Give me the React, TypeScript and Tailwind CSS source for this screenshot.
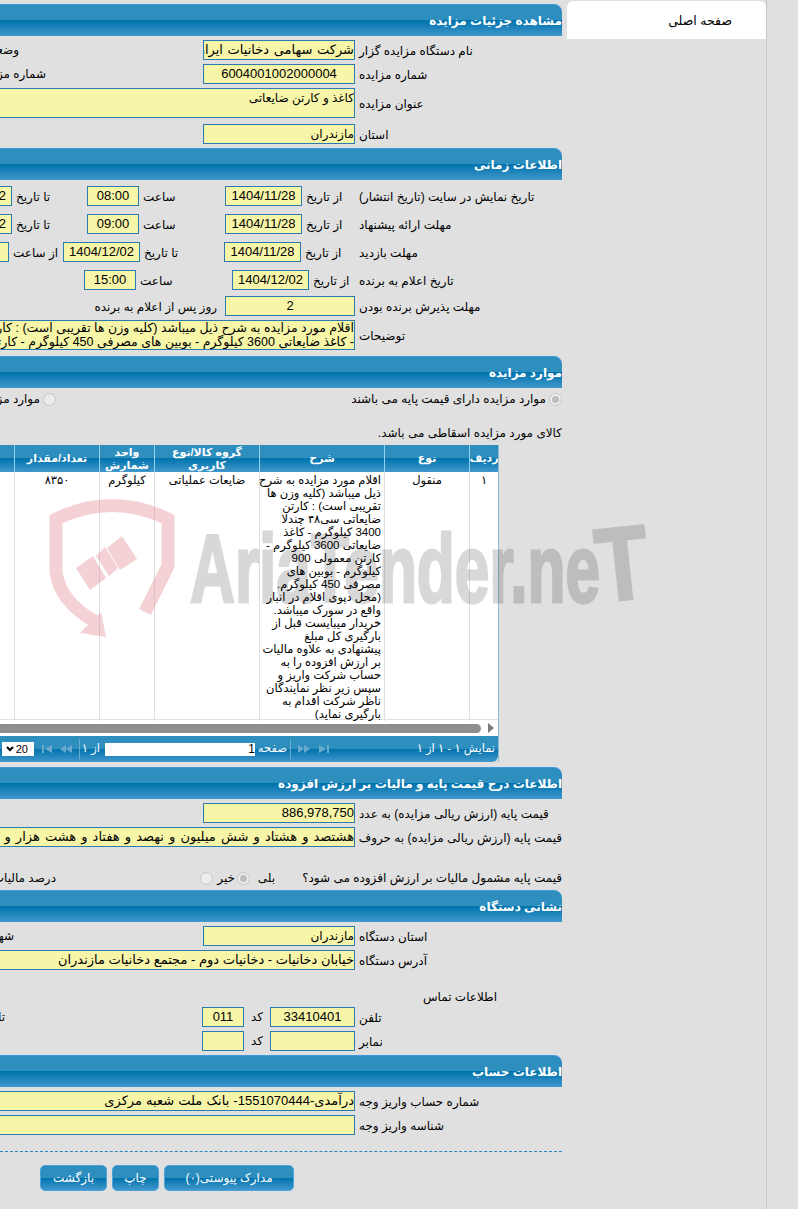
import type { ReactNode } from "react";

const BAR_BG =
  "bg-[linear-gradient(180deg,#2e8fbf_0%,#2e8fbf_48%,#0072ac_50%,#4198cc_100%)]";

const DESCRIPTION_LINES = [
  "اقلام مورد مزایده به شرح",
  "ذیل میباشد (کلیه وزن ها",
  "تقریبی است) : کارتن",
  "ضایعاتی سی۴۸ چندلا",
  "3400 کیلوگرم - کاغذ",
  "ضایعاتی 3600 کیلوگرم -",
  "کارتن معمولی 900",
  "کیلوگرم - بوبین های",
  "مصرفی 450 کیلوگرم.",
  "(محل دپوی اقلام در انبار",
  "واقع در سورک میباشد.",
  "خریدار میبایست قبل از",
  "بارگیری کل مبلغ",
  "پیشنهادی به علاوه مالیات",
  "بر ارزش افزوده را به",
  "حساب شرکت واریز و",
  "سپس زیر نظر نمایندگان",
  "ناظر شرکت اقدام به",
  "بارگیری نماید)",
];

const COLUMNS = ["ردیف", "نوع", "شرح", "گروه کالا/نوع کاربری", "واحد شمارش", "تعداد/مقدار", "قیمت پایه"];
const GRID = "grid grid-cols-[29px_85px_125px_105px_55px_85px_100px] w-[584px]";

function SectionHeader({ title, className = "" }: { title: string; className?: string }) {
  return (
    <div
      className={`h-8 w-[760px] rounded-tr-lg border-t border-[#3f9be0] ${BAR_BG} flex items-center text-[12px] font-bold text-white ${className}`}
    >
      {title}
    </div>
  );
}

function Box({
  children,
  className = "w-[152px]",
}: {
  children?: ReactNode;
  className?: string;
}) {
  return (
    <div
      className={`h-5 shrink-0 overflow-hidden whitespace-nowrap border border-[#2a7cae] bg-[#f7f5a8] text-[13px] leading-[18px] text-black ${className}`}
    >
      {children}
    </div>
  );
}

function Row({
  label,
  children,
  className = "",
}: {
  label: string;
  children?: ReactNode;
  className?: string;
}) {
  return (
    <div className={`flex items-center ${className}`}>
      <div className="w-[207px] shrink-0 pl-1 pt-[2px] text-left whitespace-nowrap">{label}</div>
      {children}
    </div>
  );
}

function Cell({ children, className = "" }: { children: ReactNode; className?: string }) {
  return <div className={`shrink-0 whitespace-nowrap pl-1 pt-[2px] text-left ${className}`}>{children}</div>;
}

function Radio({ checked = false }: { checked?: boolean }) {
  return (
    <span className="flex h-[13px] w-[13px] shrink-0 items-center justify-center rounded-full border border-[#c6c6c6] bg-[#ececec]">
      {checked && <span className="h-[7px] w-[7px] rounded-full bg-[#bdbdbd]" />}
    </span>
  );
}

function PagerIcon({ kind }: { kind: "first" | "prev" | "next" | "last" }) {
  return (
    <svg width="12" height="8" viewBox="0 0 12 8" className="shrink-0 fill-[#6aa9cf]">
      {kind === "last" && <path d="M1 0l7 4-7 4zM9 0h2v8H9z" />}
      {kind === "next" && <path d="M0 0l6 4-6 4zM6 0l6 4-6 4z" />}
      {kind === "prev" && <path d="M12 0L6 4l6 4zM6 0L0 4l6 4z" />}
      {kind === "first" && <path d="M11 0L4 4l7 4zM1 0h2v8H1z" />}
    </svg>
  );
}

function Watermark() {
  return (
    <svg
      width="798"
      height="1209"
      viewBox="0 0 798 1209"
      className="pointer-events-none absolute left-0 top-0 [direction:ltr]"
    >
      <g opacity="0.38">
        <path
          d="M145 612 L168 566 V519 Q112 492 56 519 V572 Q60 602 96 622"
          fill="none"
          stroke="#e2878f"
          strokeWidth="13"
        />
        <g fill="#e2878f">
          <path d="M106 637 L80 633 L101 612 Z" />
          <path d="M76 568 L93 556 L106 578 L90 590 Z" />
          <path d="M107 548 L122 536 L137 559 L120 570 Z" />
          <path d="M96 556 L105 547 L118 568 L109 576 Z" />
        </g>
      </g>
      <g
        opacity="0.15"
        fill="#000"
        stroke="#000"
        strokeWidth="3"
        fontFamily="'Liberation Sans', sans-serif"
        fontWeight="700"
      >
        <text
          x="190"
          y="602"
          textLength="410"
          lengthAdjust="spacingAndGlyphs"
          className="[direction:ltr]"
          fontSize="96"
        >
          AriaTender.ne
        </text>
        <text
          x="600"
          y="602"
          textLength="52"
          lengthAdjust="spacingAndGlyphs"
          className="[direction:ltr]"
          fontSize="104"
          transform="rotate(-6 600 602)"
        >
          T
        </text>
      </g>
    </svg>
  );
}

export default function App() {
  return (
    <div
      dir="rtl"
      className="relative flex h-[1209px] w-[798px] overflow-hidden bg-[#e0e0e0] font-['Liberation_Sans','DejaVu_Sans',sans-serif] text-[12px] text-black"
    >
      {/* نوار کناری */}
      <div className="w-[32px] shrink-0 border-l border-[#c8c8c8]" />
      <div className="mt-px h-[38px] w-[199px] shrink-0 rounded-t-md bg-white pr-[34px] pt-[11px] text-[12.5px]">
        صفحه اصلی
      </div>
      <div className="w-[5px] shrink-0" />

      <main className="w-[562px] shrink-0 overflow-hidden pt-1">
        <SectionHeader title="مشاهده جزئیات مزایده" />
        <Row label="نام دستگاه مزایده گزار" className="mt-1">
          <Box className="w-[152px] [word-spacing:1px]">شرکت سهامی دخانیات ایران</Box>
          <div className="mr-[184px] shrink-0 whitespace-nowrap">وضعیت</div>
        </Row>
        <Row label="شماره مزایده" className="mt-1">
          <Box className="w-[152px] text-center">6004001002000004</Box>
          <div className="mr-[157px] shrink-0 whitespace-nowrap">شماره مزایده</div>
        </Row>
        <Row label="عنوان مزایده" className="mt-1">
          <Box className="!h-[30px] w-[500px] !text-[12px]">کاغذ و کارتن ضایعاتی</Box>
        </Row>
        <Row label="استان" className="mt-1.5">
          <Box className="w-[152px] !text-[12px]">مازندران</Box>
        </Row>

        <SectionHeader title="اطلاعات زمانی" className="mt-1" />
        <Row label="تاریخ نمایش در سایت (تاریخ انتشار)" className="mt-1.5">
          <Cell className="w-[53px]">از تاریخ</Cell>
          <Box className="w-[77px] text-center">1404/11/28</Box>
          <Cell className="w-[86px]">ساعت</Cell>
          <Box className="w-[52px] text-center">08:00</Box>
          <Cell className="w-[75px]">تا تاریخ</Cell>
          <Box className="w-[77px] text-center">1404/12/02</Box>
        </Row>
        <Row label="مهلت ارائه پیشنهاد" className="mt-2">
          <Cell className="w-[53px]">از تاریخ</Cell>
          <Box className="w-[77px] text-center">1404/11/28</Box>
          <Cell className="w-[86px]">ساعت</Cell>
          <Box className="w-[52px] text-center">09:00</Box>
          <Cell className="w-[75px]">تا تاریخ</Cell>
          <Box className="w-[77px] text-center">1404/12/02</Box>
        </Row>
        <Row label="مهلت بازدید" className="mt-2">
          <Cell className="w-[54px]">از تاریخ</Cell>
          <Box className="w-[77px] text-center">1404/11/28</Box>
          <Cell className="w-[84px]">تا تاریخ</Cell>
          <Box className="w-[77px] text-center">1404/12/02</Box>
          <Cell className="w-[54px]">از ساعت</Cell>
          <Box className="w-[52px]" />
        </Row>
        <Row label="تاریخ اعلام به برنده" className="mt-2">
          <Cell className="w-[46px]">از تاریخ</Cell>
          <Box className="w-[77px] text-center">1404/12/02</Box>
          <Cell className="w-[96px]">ساعت</Cell>
          <Box className="w-[52px] text-center">15:00</Box>
        </Row>
        <Row label="مهلت پذیرش برنده بودن" className="mt-1.5">
          <Box className="w-[130px] text-center">2</Box>
          <div className="mr-2 shrink-0 whitespace-nowrap pt-[2px]">روز پس از اعلام به برنده</div>
        </Row>
        <Row label="توضیحات" className="mt-1">
          <Box className="!h-[30px] w-[500px] !text-[12.5px] !leading-[14px]">
            اقلام مورد مزایده به شرح ذیل میباشد (کلیه وزن ها تقریبی است) : کارتن ضایعاتی سی۴۸ چندلا 3400 کیلوگرم
            <br />- کاغذ ضایعاتی 3600 کیلوگرم - بوبین های مصرفی 450 کیلوگرم - کارتن معمولی 900 کیلوگرم
          </Box>
        </Row>

        <SectionHeader title="موارد مزایده" className="mt-1.5" />
        <div className="mt-1 flex h-[14px] items-center">
          <div className="flex w-[506px] shrink-0 items-center gap-[3px] whitespace-nowrap">
            <Radio checked />
            موارد مزایده دارای قیمت پایه می باشند
          </div>
          <div className="flex shrink-0 items-center gap-[3px] whitespace-nowrap">
            <Radio />
            موارد مزایده فاقد قیمت پایه می باشند
          </div>
        </div>
        <div className="mt-[17px] h-5 leading-5">کالای مورد مزایده اسقاطی می باشد.</div>

        <div className="mt-[2px] mr-[63px] w-[520px] overflow-hidden border-r border-[#8dbbd6]">
          <div className={`${GRID} h-[27px] text-[11px] font-bold leading-[13px] text-white ${BAR_BG}`}>
            {COLUMNS.map((c) => (
              <div key={c} className="flex items-center justify-center border-l border-[#8fd3f0] text-center">
                <span className="px-0.5">{c}</span>
              </div>
            ))}
          </div>
          <div className="h-[264px] bg-white">
            <div className={`${GRID} h-[248px] border-b border-[#e0e0e0] text-[11.5px] leading-[13px]`}>
              <div className="border-l border-[#e0e0e0] pt-[2px] text-center">۱</div>
              <div className="border-l border-[#e0e0e0] pt-[2px] text-center">منقول</div>
              <div className="border-l border-[#e0e0e0] pr-[3px] pt-[2px] whitespace-nowrap">
                {DESCRIPTION_LINES.map((line) => (
                  <div key={line}>{line}</div>
                ))}
              </div>
              <div className="border-l border-[#e0e0e0] pt-[2px] text-center">ضایعات عملیاتی</div>
              <div className="border-l border-[#e0e0e0] pt-[2px] text-center">کیلوگرم</div>
              <div className="border-l border-[#e0e0e0] pt-[2px] text-center">۸۳۵۰</div>
              <div />
            </div>
            <div className="mt-[3px] flex items-center">
              <svg width="6" height="10" viewBox="0 0 6 10" className="mr-[4px] shrink-0 fill-[#7d7d7d]">
                <path d="M0 0l6 5-6 5z" />
              </svg>
              <div className="mr-[7px] h-[9px] w-[520px] shrink-0 rounded-r-full bg-[#8e8e8e]" />
            </div>
          </div>
          <div className={`flex h-[26px] items-center rounded-b-md pr-[3px] text-[11.5px] text-white ${BAR_BG}`}>
            <div className="w-[165px] shrink-0 whitespace-nowrap">نمایش ۱ - ۱ از ۱</div>
            <div className="flex w-[32px] shrink-0 items-center justify-between">
              <PagerIcon kind="last" />
              <PagerIcon kind="next" />
            </div>
            <div className="mr-[7px] h-5 w-px shrink-0 bg-[#6aa9cf]" />
            <div className="mr-[3px] w-[28px] shrink-0 whitespace-nowrap">صفحه</div>
            <div className="mr-[4px] h-[13px] w-[150px] shrink-0 bg-white text-[12px] leading-[13px] text-black">1</div>
            <div className="mr-[5px] w-[15px] shrink-0 whitespace-nowrap">از ۱</div>
            <div className="mr-[5px] h-5 w-px shrink-0 bg-[#6aa9cf]" />
            <div className="mr-[7px] flex w-[31px] shrink-0 items-center justify-between">
              <PagerIcon kind="prev" />
              <PagerIcon kind="first" />
            </div>
            <div className="mr-[7px] flex h-[14px] w-[32px] shrink-0 items-center justify-between bg-white pl-[4px] pr-[6px] text-[11px] text-black">
              <span>20</span>
              <svg width="8" height="6" viewBox="0 0 8 6" fill="none" stroke="#000" strokeWidth="2">
                <path d="M1 1l3 3 3-3" />
              </svg>
            </div>
          </div>
        </div>

        <SectionHeader title="اطلاعات درج قیمت پایه و مالیات بر ارزش افزوده" className="mt-[5px]" />
        <Row label="قیمت پایه (ارزش ریالی مزایده) به عدد" className="mt-1">
          <Box>886,978,750</Box>
        </Row>
        <Row label="قیمت پایه (ارزش ریالی مزایده) به حروف" className="mt-1">
          <Box className="w-[500px] [word-spacing:1.5px]">هشتصد و هشتاد و شش میلیون و نهصد و هفتاد و هشت هزار و هفتصد و پنجاه ریال</Box>
        </Row>
        <div className="mt-[21px] flex h-5 items-center whitespace-nowrap">
          <div className="w-[254px] shrink-0">قیمت پایه مشمول مالیات بر ارزش افزوده می شود؟</div>
          <div className="mr-[33px] w-[20px] shrink-0">بلی</div>
          <div className="mr-[5px]"><Radio checked /></div>
          <div className="mr-[2px] w-[17px] shrink-0">خیر</div>
          <div className="mr-[5px]"><Radio /></div>
          <div className="mr-[144px] shrink-0">درصد مالیات</div>
        </div>

        <SectionHeader title="نشانی دستگاه" className="mt-[2px]" />
        <Row label="استان دستگاه" className="mt-1">
          <Box className="w-[152px] !text-[12px]">مازندران</Box>
          <div className="mr-[189px] shrink-0 whitespace-nowrap">شهر دستگاه</div>
        </Row>
        <Row label="آدرس دستگاه" className="mt-1">
          <Box className="w-[500px]">خیابان دخانیات - دخانیات دوم - مجتمع دخانیات مازندران</Box>
        </Row>
        <div className="mt-[19px] h-4 pr-[65px] leading-4">اطلاعات تماس</div>
        <Row label="تلفن" className="mt-[2px]">
          <Box className="w-[85px] text-center">33410401</Box>
          <div className="w-[26px] shrink-0 pr-[7px]">کد</div>
          <Box className="w-[42px] text-center">011</Box>
          <div className="mr-[197px] shrink-0 whitespace-nowrap">تلفن همراه</div>
        </Row>
        <Row label="نمابر" className="mt-1">
          <Box className="w-[85px]" />
          <div className="w-[26px] shrink-0 pr-[7px]">کد</div>
          <Box className="w-[42px]" />
        </Row>

        <SectionHeader title="اطلاعات حساب" className="mt-1" />
        <Row label="شماره حساب واریز وجه" className="mt-1">
          <Box className="w-[500px] [word-spacing:0.5px]">درآمدی-1551070444- بانک ملت شعبه مرکزی</Box>
        </Row>
        <Row label="شناسه واریز وجه" className="mt-1">
          <Box className="w-[500px]" />
        </Row>
        <div className="mt-[16px] border-t border-dashed border-[#2a86bd]" />
        <div className="mt-[13px] flex justify-start gap-[5px] pr-[268px] text-white">
          {[
            ["مدارک پیوستی(۰)", "w-[130px]"],
            ["چاپ", "w-[47px]"],
            ["بازگشت", "w-[67px]"],
          ].map(([text, width]) => (
            <button
              key={text}
              className={`h-[26px] shrink-0 rounded-[5px] border border-[#4aa3dc] text-[12px] ${BAR_BG} ${width}`}
            >
              {text}
            </button>
          ))}
        </div>
      </main>

      <Watermark />
    </div>
  );
}
